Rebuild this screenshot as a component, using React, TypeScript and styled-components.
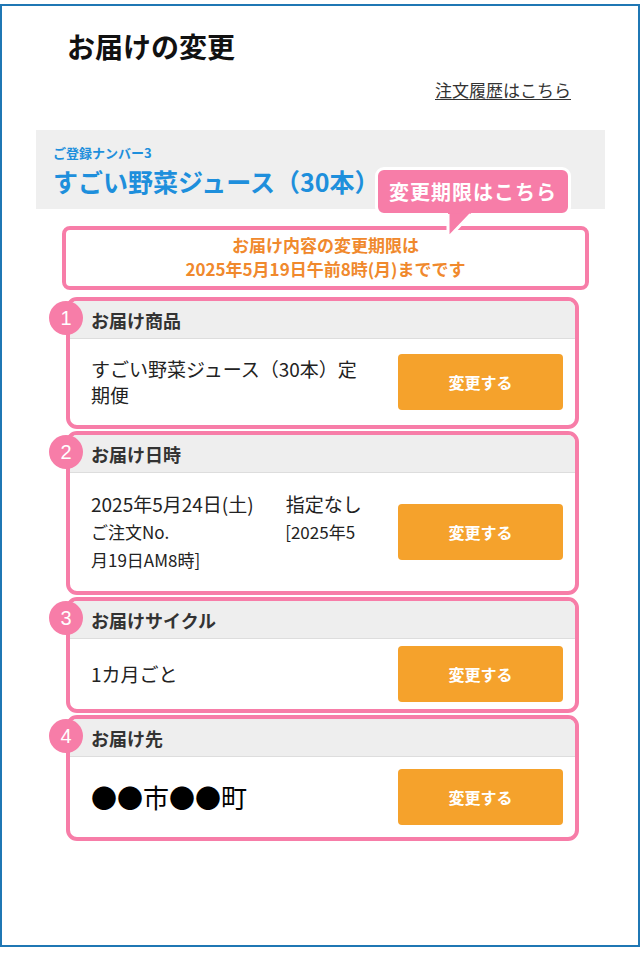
import React from 'react';
import styled, { createGlobalStyle } from 'styled-components';

const PINK = '#f77da8';

const GlobalStyle = createGlobalStyle`
  body {
    margin: 0;
    background: #fff;
    color: #222;
    font-family: "Noto Sans CJK JP", "Noto Sans", sans-serif;
  }
`;

const Frame = styled.div`
  box-sizing: border-box;
  width: 640px;
  height: 943px;
  margin-top: 4px;
  border: 2px solid #1f77b4;
  background: #fff;
`;

const PageHeader = styled.header`
  padding: 20px 0 0 65px;
`;

const Title = styled.h1`
  margin: 0;
  font-size: 28px;
  line-height: 40px;
  font-weight: 700;
  color: #111;
`;

const LinkRow = styled.div`
  margin-top: 12px;
  padding-right: 67px;
  text-align: right;
  font-size: 17px;
  line-height: 24px;
`;

const HistoryLink = styled.a`
  color: #333;
  text-decoration: underline;
  text-underline-offset: 2px;
`;

const ProductArea = styled.section`
  position: relative;
  margin-top: 28px;
`;

const Band = styled.div`
  margin: 0 33px 0 34px;
  padding: 14px 17px 12px;
  background: #efefef;
  color: #1e8fdc;
`;

const RegLabel = styled.div`
  font-size: 13px;
  line-height: 18px;
  font-weight: 700;
`;

const ProductName = styled.div`
  margin-top: 3px;
  font-size: 25px;
  line-height: 32px;
  font-weight: 700;
`;

const Bubble = styled.div`
  position: absolute;
  left: 373px;
  top: 37px;
  box-sizing: border-box;
  width: 196px;
  height: 49px;
  display: flex;
  align-items: center;
  justify-content: center;
  border: 3px solid #fff;
  border-radius: 9px;
  background: ${PINK};
  color: #fff;
  font-size: 20px;
  font-weight: 700;
  letter-spacing: 1px;
  z-index: 2;
`;

const Tail = styled.svg`
  position: absolute;
  left: 437px;
  top: 79px;
  z-index: 3;
`;

const Notice = styled.div`
  margin: 17px 49px 0 60px;
  padding: 3px 0 5px;
  border: 4px solid ${PINK};
  border-radius: 8px;
  text-align: center;
  color: #f0892d;
  font-size: 17px;
  line-height: 24px;
  font-weight: 700;
`;

const CardList = styled.div`
  display: flex;
  flex-direction: column;
  gap: 2px;
  margin: 7px 59px 0 64px;
`;

const Card = styled.div`
  position: relative;
  border: 4px solid ${PINK};
  border-radius: 11px;
  background: #fff;
`;

const Badge = styled.span`
  position: absolute;
  left: -21px;
  top: 0;
  width: 34px;
  height: 34px;
  border-radius: 50%;
  background: ${PINK};
  color: #fff;
  display: flex;
  align-items: center;
  justify-content: center;
  font-family: "Liberation Sans", Arial, sans-serif;
  font-size: 20px;
`;

const CardHead = styled.div`
  height: 37px;
  padding-left: 21px;
  display: flex;
  align-items: center;
  background: #eeeeee;
  border-bottom: 1px solid #dddddd;
  border-radius: 7px 7px 0 0;
  color: #333;
  font-size: 18px;
  font-weight: 700;
`;

const CardBody = styled.div`
  display: flex;
  align-items: center;
  justify-content: space-between;
  padding: 7px 12px 7px 21px;
`;

const BodyText = styled.div<{ $large?: boolean }>`
  width: 275px;
  padding: 10px 0;
  color: ${(p) => (p.$large ? '#000' : '#222')};
  font-size: ${(p) => (p.$large ? '26px' : '19px')};
  line-height: ${(p) => (p.$large ? '46px' : '26px')};
`;

const DateLine = styled.div`
  line-height: 28px;
`;

const OrderLine = styled.div`
  font-size: 17px;
  line-height: 28px;
`;

const Slot = styled.span`
  padding-left: 32px;
`;

const HiddenNo = styled.span`
  display: inline-block;
  width: 116px;
`;

const ChangeButton = styled.button`
  flex: none;
  width: 165px;
  height: 56px;
  border: 0;
  border-radius: 4px;
  background: #f5a22c;
  color: #fff;
  font-family: inherit;
  font-size: 16px;
  font-weight: 700;
  cursor: pointer;
`;

type Item = { no: number; title: string; body: React.ReactNode; large?: boolean };

const items: Item[] = [
  { no: 1, title: 'お届け商品', body: 'すごい野菜ジュース（30本）定期便' },
  {
    no: 2,
    title: 'お届け日時',
    body: (
      <>
        <DateLine>
          2025年5月24日(土)<Slot>指定なし</Slot>
        </DateLine>
        <OrderLine>
          ご注文No.<HiddenNo />[2025年5
          <br />
          月19日AM8時]
        </OrderLine>
      </>
    ),
  },
  { no: 3, title: 'お届けサイクル', body: '1カ月ごと' },
  { no: 4, title: 'お届け先', body: '●●市●●町', large: true },
];

export default function App() {
  return (
    <>
      <GlobalStyle />
      <Frame>
        <PageHeader>
          <Title>お届けの変更</Title>
        </PageHeader>
        <LinkRow>
          <HistoryLink href="#">注文履歴はこちら</HistoryLink>
        </LinkRow>

        <ProductArea>
          <Band>
            <RegLabel>ご登録ナンバー3</RegLabel>
            <ProductName>すごい野菜ジュース（30本）</ProductName>
          </Band>
          <Bubble>変更期限はこちら</Bubble>
          <Tail width="40" height="34" viewBox="0 0 40 34">
            <path d="M9 0 L36 0 L9 29 Z" fill={PINK} />
            <path d="M9 5 L9 29 L32 5" fill="none" stroke="#fff" strokeWidth="3" strokeLinejoin="round" />
            <path d="M9 0 L36 0 L31.5 4.5 L10.5 4.5 Z" fill={PINK} />
          </Tail>
          <Notice>
            お届け内容の変更期限は
            <br />
            2025年5月19日午前8時(月)までです
          </Notice>
        </ProductArea>

        <CardList>
          {items.map((item) => (
            <Card key={item.no}>
              <Badge>{item.no}</Badge>
              <CardHead>{item.title}</CardHead>
              <CardBody>
                <BodyText $large={item.large}>{item.body}</BodyText>
                <ChangeButton type="button">変更する</ChangeButton>
              </CardBody>
            </Card>
          ))}
        </CardList>
      </Frame>
    </>
  );
}
